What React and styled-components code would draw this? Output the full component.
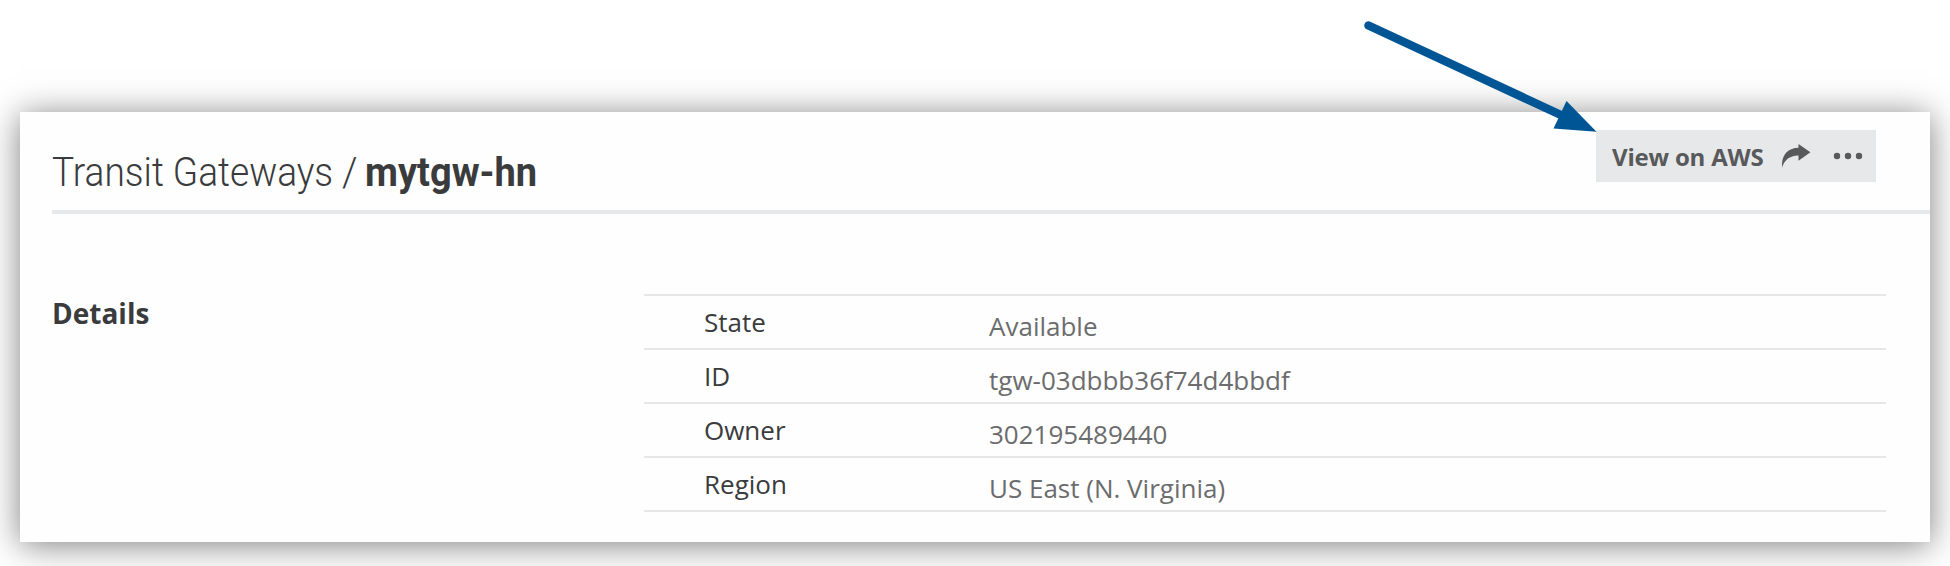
import React from "react";
import styled, { createGlobalStyle } from "styled-components";

const GlobalStyle = createGlobalStyle`
  * { box-sizing: border-box; }
  body {
    margin: 0;
    background: #fff;
    overflow: hidden;
    font-family: "Open Sans", "Noto Sans", sans-serif;
  }
`;

const Page = styled.main`
  position: relative;
  height: 566px;
  padding: 112px 20px 24px;
`;

const Card = styled.section`
  height: 430px;
  padding-left: 32px;
  background: #fefefe;
  box-shadow: 0 3px 32px rgba(0, 0, 0, 0.5);
`;

const Header = styled.header`
  display: flex;
  justify-content: space-between;
  align-items: flex-start;
  height: 102px;
  padding: 18px 54px 0 0;
  border-bottom: 4px solid #e7e8ea;
`;

const Title = styled.h1`
  display: flex;
  margin: 18px 0 0;
  font: 300 41px/48px Roboto, "Open Sans", sans-serif;
  color: #3a3b3d;
  white-space: pre;
`;

const Crumb = styled.span`
  width: ${(p) => p.$width}px;
  font-weight: ${(p) => (p.$current ? 700 : 300)};
  transform: scaleX(${(p) => p.$stretch});
  transform-origin: left center;
`;

const Actions = styled.div`
  display: flex;
  align-items: center;
  width: 280px;
  height: 52px;
  padding-left: 16px;
  background: #e7e8ea;
  color: #58595b;
`;

const ActionLabel = styled.span`
  width: 170px;
  padding-top: 1px;
  font-size: 24px;
  line-height: 32px;
  font-weight: 700;
  letter-spacing: -0.2px;
  white-space: nowrap;
`;

const Body = styled.div`
  display: flex;
  padding-top: 80px;
`;

const SectionTitle = styled.h2`
  width: 592px;
  margin: -1px 0 0;
  font-size: 28px;
  line-height: 40px;
  font-weight: 700;
  color: #3a3b3d;
`;

const Table = styled.dl`
  width: 1242px;
  margin: 0;
  border-top: 2px solid #e7e7e7;
`;

const Row = styled.div`
  display: flex;
  height: 54px;
  padding-left: 60px;
  border-bottom: 2px solid #e7e7e7;
  font-size: 26px;
  line-height: 36px;
`;

const Term = styled.dt`
  width: 285px;
  padding-top: 8px;
  color: #3a3b3d;
`;

const Value = styled.dd`
  margin: 0;
  padding-top: 12px;
  color: #6b6c6d;
`;

const Pointer = styled.svg`
  position: absolute;
  left: 1360px;
  top: 16px;
`;

const ROWS = [
  ["State", "Available"],
  ["ID", "tgw-03dbbb36f74d4bbdf"],
  ["Owner", "302195489440"],
  ["Region", "US East (N. Virginia)"],
];

export default function App() {
  return (
    <Page>
      <GlobalStyle />
      <Card>
        <Header>
          <Title>
            <Crumb $width={290} $stretch={0.904}>Transit Gateways</Crumb>
            <Crumb $width={23} $stretch={0.95}>/</Crumb>
            <Crumb $current $width={180} $stretch={0.927}>mytgw-hn</Crumb>
          </Title>
          <Actions>
            <ActionLabel>View on AWS</ActionLabel>
            <svg width="30" height="26" viewBox="0 0 30 26" fill="currentColor">
              <path d="M0 24.800C-.8 12 5.500 5 16.500 4.700V.9L28.400 9.300 16.500 17.800V12.500C8 12.300 2 17.200 0 24.800Z" />
            </svg>
            <svg width="64" height="8" viewBox="0 0 64 8" fill="currentColor">
              <circle cx="25" cy="4" r="3.200" />
              <circle cx="36" cy="4" r="3.200" />
              <circle cx="47" cy="4" r="3.200" />
            </svg>
          </Actions>
        </Header>
        <Body>
          <SectionTitle>Details</SectionTitle>
          <Table>
            {ROWS.map(([term, value]) => (
              <Row key={term}>
                <Term>{term}</Term>
                <Value>{value}</Value>
              </Row>
            ))}
          </Table>
        </Body>
      </Card>
      <Pointer width="240" height="120" viewBox="1360 16 240 120">
        <path d="M1368.500 25.500 1562 115.500" stroke="#005595" strokeWidth="8.500" strokeLinecap="round" />
        <path d="M1596.500 131.800 1566.500 101 1553.500 128.500Z" fill="#005595" />
      </Pointer>
    </Page>
  );
}
